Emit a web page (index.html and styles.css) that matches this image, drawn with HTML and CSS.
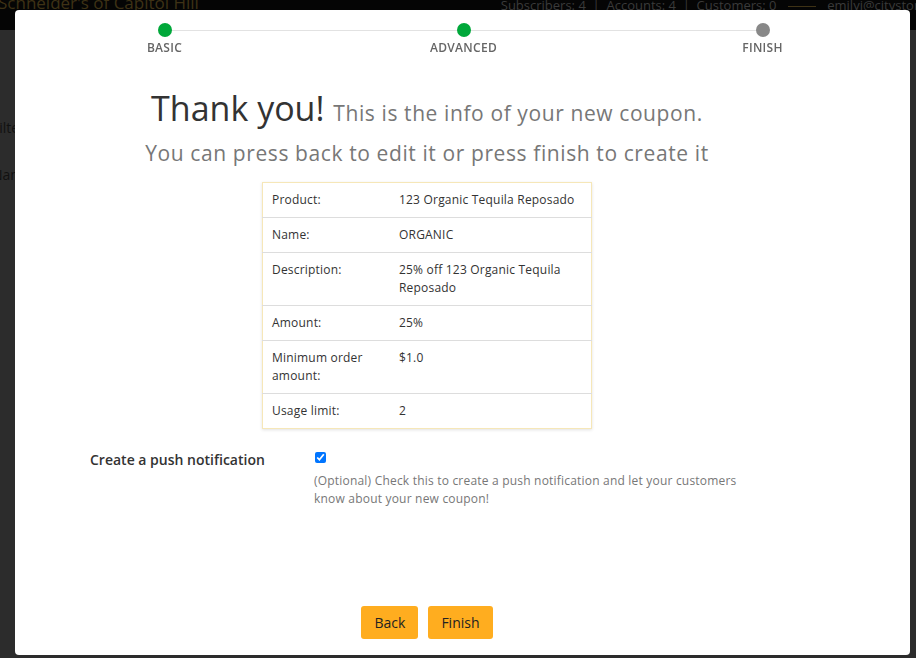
FILE: index.html
```html
<html>
  <head>
    <title>New coupon</title>
    <link rel="stylesheet" href="styles.css">
  </head>

  <body>
    <div class="topbar">
      <span class="brand">Schneider's of Capitol Hill</span>
      <span class="stats">
        Subscribers: 4 &nbsp;|&nbsp; Accounts: 4 &nbsp;|&nbsp; Customers: 0
        <span class="rule"></span> emilyi@citystore.com
      </span>
    </div>

    <div class="page">
      <div class="page-text first">Filters</div>
      <div class="page-text">Name</div>
    </div>

    <div class="modal">
      <div class="steps">
        <div class="step done"><span class="dot"></span>BASIC</div>
        <div class="step done"><span class="dot"></span>ADVANCED</div>
        <div class="step"><span class="dot"></span>FINISH</div>
      </div>

      <div class="content">
        <h1 class="title">Thank you! <small>This is the info of your new coupon.</small></h1>
        <h2 class="subtitle">You can press back to edit it or press finish to create it</h2>

        <table class="summary">
          <tr><td>Product:</td><td>123 Organic Tequila Reposado</td></tr>
          <tr><td>Name:</td><td>ORGANIC</td></tr>
          <tr><td>Description:</td><td>25% off 123 Organic Tequila Reposado</td></tr>
          <tr><td>Amount:</td><td>25%</td></tr>
          <tr><td>Minimum order amount:</td><td>$1.0</td></tr>
          <tr><td>Usage limit:</td><td>2</td></tr>
        </table>

        <div class="push">
          <label for="push" class="push-label">Create a push notification</label>
          <div class="push-field">
            <input type="checkbox" id="push" checked>
            <p class="help">
              (Optional) Check this to create a push notification and let your
              customers know about your new coupon!
            </p>
          </div>
        </div>

        <div class="buttons">
          <button class="btn">Back</button>
          <button class="btn">Finish</button>
        </div>
      </div>
    </div>
  </body>
</html>
```

FILE: styles.css
```css
body {
  margin: 0;
  background: #2c2c2c;
  font-family: "Open Sans", sans-serif;
  height: 658px;
  overflow: hidden;
}

.topbar {
  height: 30px;
  background: #050505;
  display: flex;
  justify-content: space-between;
  align-items: flex-start;
  overflow: hidden;
}

.brand {
  color: #3e3215;
  font-size: 17px;
  margin-top: -9px;
  margin-left: -2px;
}

.stats {
  color: #3a3a3a;
  font-size: 13px;
  margin-top: -4px;
  margin-right: -40px;
  white-space: nowrap;
}

.rule {
  display: inline-block;
  width: 28px;
  height: 1px;
  background: #3e3215;
  vertical-align: middle;
  margin: 0 8px;
}

.page {
  padding-top: 88px;
}

.page-text {
  color: #111;
  font-size: 14px;
  margin-left: -8px;
  margin-bottom: 28px;
}

.modal {
  position: fixed;
  top: 10px;
  left: 15px;
  width: 895px;
  height: 645px;
  background: #fff;
  border-radius: 4px;
  color: #333;
}

/* stepper */
.steps {
  position: relative;
  width: 678px;
  margin: 0 auto;
  padding-top: 13px;
  display: flex;
  justify-content: space-between;
  transform: translateX(1px);
}

.steps::before {
  content: '';
  position: absolute;
  left: 40px;
  right: 40px;
  top: 20px;
  height: 1px;
  background: #e2e2e2;
}

.step {
  width: 80px;
  text-align: center;
  font-size: 12px;
  letter-spacing: 0.3px;
  font-weight: 600;
  color: #666;
  position: relative;
  line-height: 16px;
}

.dot {
  display: block;
  width: 14px;
  height: 14px;
  border-radius: 50%;
  background: #888;
  margin: 0 auto 3px;
}

.step.done .dot {
  background: #00a83a;
}

/* body */
.content {
  padding-right: 71px;
  text-align: center;
}

h1.title {
  margin: 31px 0 0;
  font-size: 34px;
  font-weight: normal;
  color: #333;
  line-height: 42px;
}

h1.title small {
  font-size: 21px;
  letter-spacing: 0.6px;
  color: #777;
}

h2.subtitle {
  margin: 0;
  font-size: 21px;
  letter-spacing: 0.6px;
  font-weight: normal;
  color: #777;
  line-height: 38px;
}

.summary {
  margin: 10px auto 0;
  width: 330px;
  border-collapse: collapse;
  border: 1px solid #f6e7b8;
  box-shadow: 0 1px 3px rgba(0, 0, 0, 0.12);
  text-align: left;
  font-size: 12px;
  letter-spacing: 0.2px;
  line-height: 18px;
  color: #333;
}

.summary td {
  padding: 8px 9px 8px;
  vertical-align: top;
  border-top: 1px solid #ddd;
}

.summary tr:first-child td {
  border-top: none;
}

.summary td:first-child {
  width: 109px;
}

.push {
  display: flex;
  text-align: left;
  margin-top: 20px;
  padding-left: 75px;
}

.push-label {
  width: 224px;
  font-size: 14px;
  font-weight: 600;
  color: #333;
  padding-top: 1px;
}

.push-field {
  width: 430px;
}

.push-field input {
  margin: 3px 0 0 1px;
  width: 11px;
  height: 11px;
}

.help {
  margin: 9px 0 0;
  font-size: 12px;
  letter-spacing: 0.2px;
  line-height: 18px;
  color: #777;
}

.buttons {
  margin-top: 98px;
  display: flex;
  justify-content: center;
  gap: 10px;
}

.btn {
  background: #ffad1f;
  border: none;
  border-radius: 3px;
  font-family: "Open Sans", sans-serif;
  font-size: 14px;
  color: #222;
  height: 33px;
  padding: 0 13px;
}
```
